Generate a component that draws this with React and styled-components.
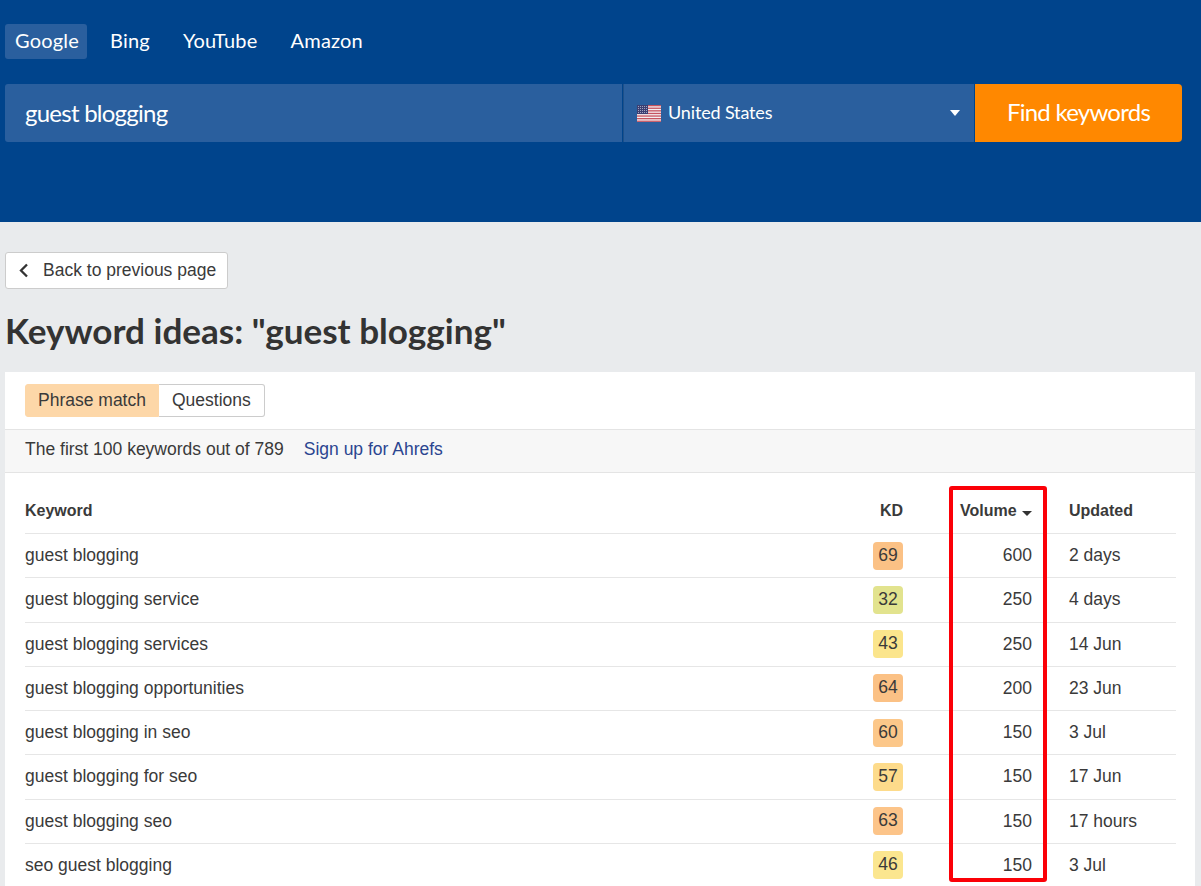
import React from "react";
import styled, { createGlobalStyle } from "styled-components";

const rows = [
  { keyword: "guest blogging", kd: 69, kdColor: "#fbc185", volume: 600, updated: "2 days" },
  { keyword: "guest blogging service", kd: 32, kdColor: "#e2e38e", volume: 250, updated: "4 days" },
  { keyword: "guest blogging services", kd: 43, kdColor: "#fbe58c", volume: 250, updated: "14 Jun" },
  { keyword: "guest blogging opportunities", kd: 64, kdColor: "#fbc185", volume: 200, updated: "23 Jun" },
  { keyword: "guest blogging in seo", kd: 60, kdColor: "#fcc789", volume: 150, updated: "3 Jul" },
  { keyword: "guest blogging for seo", kd: 57, kdColor: "#fddb8b", volume: 150, updated: "17 Jun" },
  { keyword: "guest blogging seo", kd: 63, kdColor: "#fcc489", volume: 150, updated: "17 hours" },
  { keyword: "seo guest blogging", kd: 46, kdColor: "#fbe68f", volume: 150, updated: "3 Jul" },
];

const UsFlag = () => (
  <svg width="24" height="17" viewBox="0 0 24 17">
    <rect width="24" height="17" fill="#f4eef0" />
    {[0, 2.6, 5.2, 7.8, 10.4, 13, 15.6].map((y) => (
      <rect key={y} y={y} width="24" height="1.3" fill="#c5535f" />
    ))}
    <rect width="11" height="9" fill="#3c3f72" />
    <path d="M1 1.5h9M1 3.5h9M1 5.5h9M1 7.5h9" stroke="#b9bdd2" strokeWidth="0.8" strokeDasharray="1 1" />
  </svg>
);

const BackIcon = () => (
  <svg width="11" height="15" viewBox="0 0 11 15">
    <path d="M9 1.5 3 7.5l6 6" fill="none" stroke="#333" strokeWidth="2.3" />
  </svg>
);

const App = () => {
  return (
    <Page>
      <GlobalStyle />
      <Header>
        <Engines>
          <Engine $active>Google</Engine>
          <Engine>Bing</Engine>
          <Engine>YouTube</Engine>
          <Engine>Amazon</Engine>
        </Engines>
        <SearchBar>
          <SearchInput>guest blogging</SearchInput>
          <CountrySelect>
            <UsFlag />
            <CountryName>United States</CountryName>
            <SelectCaret />
          </CountrySelect>
          <FindButton>Find keywords</FindButton>
        </SearchBar>
      </Header>
      <Main>
        <BackButton>
          <BackIcon />
          Back to previous page
        </BackButton>
        <Title>Keyword ideas: "guest blogging"</Title>
        <Card>
          <Tabs>
            <Tab $active>Phrase match</Tab>
            <Tab>Questions</Tab>
          </Tabs>
          <InfoBar>
            The first 100 keywords out of 789
            <SignUp>Sign up for Ahrefs</SignUp>
          </InfoBar>
          <Table>
            <HeadRow>
              <span>Keyword</span>
              <NumCell>KD</NumCell>
              <NumCell>
                Volume <SortCaret />
              </NumCell>
              <UpdatedCell>Updated</UpdatedCell>
            </HeadRow>
            {rows.map((row) => (
              <Row key={row.keyword}>
                <span>{row.keyword}</span>
                <NumCell>
                  <KdBadge $color={row.kdColor}>{row.kd}</KdBadge>
                </NumCell>
                <NumCell>{row.volume}</NumCell>
                <UpdatedCell>{row.updated}</UpdatedCell>
              </Row>
            ))}
          </Table>
          <Highlight />
        </Card>
      </Main>
    </Page>
  );
};

export default App;

const GlobalStyle = createGlobalStyle`
  html, body {
    margin: 0;
    height: 100%;
    overflow: hidden;
    background: #e9ebed;
  }
`;

const Page = styled.div`
  font-family: "Liberation Sans", Arial, sans-serif;
  color: #3a3a3a;
  height: 886px;
  overflow: hidden;
`;

// top bar
const Header = styled.header`
  height: 222px;
  box-sizing: border-box;
  background: #00448c;
  padding: 24px 19px 0 5px;
  font-family: Lato, sans-serif;
  color: #fff;
`;

const Engines = styled.nav`
  display: flex;
  gap: 13px;
`;

const Engine = styled.a`
  height: 35px;
  line-height: 33px;
  padding: 0 ${(props) => (props.$active ? "8px" : "10px")} 0 10px;
  border-radius: 3px;
  font-size: 20px;
  letter-spacing: 0.2px;
  background: ${(props) => (props.$active ? "#2a5f9e" : "transparent")};
`;

const SearchBar = styled.div`
  display: flex;
  height: 58px;
  margin-top: 25px;
`;

const SearchInput = styled.div`
  width: 617px;
  box-sizing: border-box;
  padding-left: 20px;
  line-height: 57px;
  font-size: 24px;
  letter-spacing: -0.75px;
  background: #2a5f9e;
  border-radius: 3px 0 0 3px;
`;

const CountrySelect = styled.div`
  width: 351px;
  box-sizing: border-box;
  display: flex;
  align-items: center;
  gap: 7px;
  padding: 0 14px 0 13px;
  margin-left: 1px;
  background: #2a5f9e;
  border-left: 1px solid #1d5089;
`;

const CountryName = styled.span`
  flex: 1;
  font-size: 18px;
  letter-spacing: -0.15px;
  padding-bottom: 2px;
`;

const SelectCaret = styled.span`
  width: 0;
  height: 0;
  border-left: 5px solid transparent;
  border-right: 5px solid transparent;
  border-top: 6px solid #fff;
`;

const FindButton = styled.button`
  width: 207px;
  margin-left: 1px;
  border: none;
  padding: 0 0 3px;
  border-radius: 0 4px 4px 0;
  background: #ff8800;
  color: #fff;
  font-family: Lato, sans-serif;
  font-size: 24px;
  letter-spacing: -0.75px;
`;

// page body
const Main = styled.main`
  padding: 30px 6px 0 5px;
`;

const BackButton = styled.button`
  width: 223px;
  height: 37px;
  box-sizing: border-box;
  display: flex;
  align-items: center;
  gap: 14px;
  padding: 0 0 0 12px;
  border: 1px solid #ccc;
  border-radius: 3px;
  background: #fff;
  color: #3a3a3a;
  font-family: "Liberation Sans", Arial, sans-serif;
  font-size: 17.5px;
`;

const Title = styled.h1`
  margin: 19px 0 19px;
  height: 45px;
  line-height: 45px;
  font-family: Lato, sans-serif;
  font-size: 35.1px;
  font-weight: 700;
  color: #333;
`;

const Card = styled.section`
  position: relative;
  background: #fff;
  height: 522px;
`;

const Tabs = styled.div`
  display: flex;
  padding: 12px 20px;
`;

const Tab = styled.button`
  height: 33px;
  box-sizing: border-box;
  padding: ${(props) => (props.$active ? "0 12px" : "0 13px 0 13px")};
  border: 1px solid ${(props) => (props.$active ? "#fdd7a8" : "#ccc")};
  border-left-width: ${(props) => (props.$active ? "1px" : "0")};
  border-radius: ${(props) => (props.$active ? "3px 0 0 3px" : "0 3px 3px 0")};
  background: ${(props) => (props.$active ? "#fdd7a8" : "#fff")};
  color: #3a3a3a;
  font-family: "Liberation Sans", Arial, sans-serif;
  font-size: 17.5px;
`;

const InfoBar = styled.div`
  height: 44px;
  box-sizing: border-box;
  display: flex;
  align-items: center;
  gap: 20px;
  padding: 0 20px 3px;
  background: #f7f7f7;
  border-top: 1px solid #e4e4e4;
  border-bottom: 1px solid #e4e4e4;
  font-size: 17.5px;
`;

const SignUp = styled.a`
  color: #2b4590;
`;

const Table = styled.div`
  margin: 17px 19px 0 20px;
  font-size: 17.5px;
`;

const HeadRow = styled.div`
  display: grid;
  grid-template-columns: 1fr 60px 129px 144px;
  align-items: center;
  height: 44px;
  box-sizing: border-box;
  padding-bottom: 2px;
  font-size: 16px;
  font-weight: 700;
  border-bottom: 1px solid #e6e6e6;
`;

const Row = styled(HeadRow)`
  height: 44.25px;
  padding-bottom: 0;
  font-size: 17.5px;
  font-weight: 400;
`;

const NumCell = styled.span`
  text-align: right;
`;

const UpdatedCell = styled.span`
  padding-left: 37px;
`;

const KdBadge = styled.span`
  display: inline-block;
  width: 30px;
  height: 28px;
  line-height: 27px;
  text-align: center;
  border-radius: 4px;
  background: ${(props) => props.$color};
  vertical-align: middle;
`;

const SortCaret = styled.span`
  display: inline-block;
  margin-left: 1px;
  width: 0;
  height: 0;
  border-left: 5px solid transparent;
  border-right: 5px solid transparent;
  border-top: 5px solid #333;
  vertical-align: 0;
`;

// red annotation drawn over the volume column
const Highlight = styled.div`
  position: absolute;
  left: 944px;
  top: 114px;
  width: 98px;
  height: 396px;
  box-sizing: border-box;
  border: 4px solid #fb0007;
  border-radius: 3px;
  pointer-events: none;
`;
